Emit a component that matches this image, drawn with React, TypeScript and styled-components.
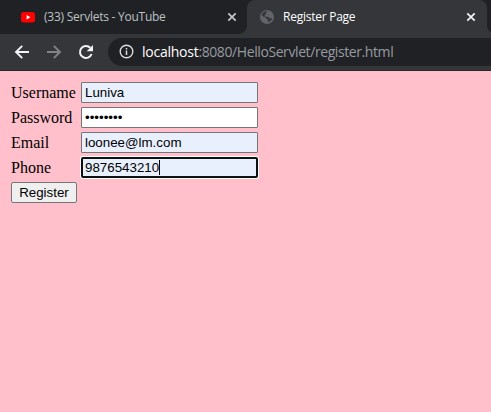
import React from "react";
import styled, { createGlobalStyle } from "styled-components";

const GlobalStyle = createGlobalStyle`
  * { box-sizing: border-box; }
  body { margin: 0; background: #ffc0cb; overflow: hidden; }
`;

const Browser = styled.div`
  width: 491px;
  height: 412px;
  display: flex;
  flex-direction: column;
  background: #ffc0cb;
  font-family: "Open Sans", "Noto Sans", sans-serif;
`;

const TabStrip = styled.div`
  display: flex;
  height: 34px;
  flex: none;
  background: #202124;
`;

const Tab = styled.div<{ $active?: boolean }>`
  position: relative;
  display: flex;
  align-items: center;
  width: ${(p) => (p.$active ? 240 : 247)}px;
  padding: ${(p) => (p.$active ? "0 11px 0 12px" : "0 10px 0 20px")};
  gap: 8px;
  flex: none;
  border-radius: 8px 8px 0 0;
  background: ${(p) => (p.$active ? "#35363a" : "#202124")};
  color: ${(p) => (p.$active ? "#ffffff" : "#bdc1c6")};

  ${(p) =>
    p.$active &&
    `
    &::before, &::after {
      content: "";
      position: absolute;
      bottom: 0;
      width: 8px;
      height: 8px;
    }
    &::before { left: -8px; background: radial-gradient(circle at 0 0, #202124 7.5px, #35363a 8px); }
    &::after { right: -8px; background: radial-gradient(circle at 100% 0, #202124 7.5px, #35363a 8px); }
  `}
`;

const TabTitle = styled.span<{ $spacing: number }>`
  flex: 1;
  font-size: 12px;
  line-height: 16px;
  white-space: nowrap;
  letter-spacing: ${(p) => p.$spacing}px;
`;

const Icon = styled.svg`
  display: block;
  flex: none;
`;

const Toolbar = styled.div`
  display: flex;
  align-items: center;
  height: 37px;
  flex: none;
  padding: 0 0 1px 14px;
  background: #35363a;
  border-bottom: 1px solid #29292d;
`;

const NavButton = styled.div`
  display: flex;
  width: 32px;
  flex: none;
`;

const AddressBar = styled.div`
  display: flex;
  align-items: center;
  flex: 1;
  height: 28px;
  margin-left: -2px;
  padding-left: 11px;
  gap: 8px;
  border-radius: 14px 0 0 14px;
  background: #202124;
`;

const Url = styled.span`
  font-size: 14px;
  line-height: 20px;
  letter-spacing: -0.41px;
  white-space: nowrap;
  color: #969ba1;
`;

const Host = styled.span`
  letter-spacing: -0.25px;
  color: #ffffff;
`;

const Form = styled.form`
  display: grid;
  grid-template-columns: 66px 177px;
  grid-template-rows: repeat(5, 21px);
  gap: 4px;
  padding: 11px 0 0 11px;
`;

const Label = styled.label`
  font: 16px/21px "Liberation Serif", serif;
  color: #000;
`;

const Field = styled.div`
  position: relative;
  height: 21px;
`;

const Input = styled.input<{ $filled?: boolean; $focused?: boolean }>`
  display: block;
  width: 177px;
  height: 21px;
  margin: 0;
  padding: 1px 3px;
  border: 1px solid #767676;
  border-radius: 1px;
  outline: none;
  background: ${(p) => (p.$filled ? "#e8f0fe" : "#fff")};
  color: #000;
  font: 13.333px "Liberation Sans", Arial, sans-serif;
  ${(p) =>
    p.$focused &&
    `
    border: 2px solid #101010;
    border-radius: 2px;
    padding: 0 2px;
    box-shadow: 0 0 0 1px #fff;
  `}
`;

const Caret = styled.span`
  position: absolute;
  left: 78px;
  top: 3px;
  width: 1px;
  height: 15px;
  background: #000;
`;

const Submit = styled.button`
  width: 66px;
  height: 21px;
  padding: 0;
  border: 1px solid #767676;
  border-radius: 2px;
  background: #efefef;
  color: #000;
  font: 13.333px "Liberation Sans", Arial, sans-serif;
`;

const CloseIcon = ({ color }: { color: string }) => (
  <Icon width="10" height="10" viewBox="0 0 10 10">
    <path d="M1.3 1.3 8.7 8.7M8.7 1.3 1.3 8.7" stroke={color} strokeWidth="1.7" />
  </Icon>
);

const YouTubeIcon = () => (
  <Icon width="16" height="16" viewBox="0 0 16 16">
    <rect x="1" y="3" width="14" height="10.5" rx="2.5" fill="#f00" />
    <path d="M6.6 6v4.4L10.4 8.2z" fill="#fff" />
  </Icon>
);

const GlobeIcon = () => (
  <Icon width="16" height="16" viewBox="0 0 16 16">
    <circle cx="8" cy="8" r="7" fill="#606368" />
    <path
      d="M8.6 2.4C6.9 3 6.7 4.2 7.1 5.1L5.6 6.3l.3 1.5h3.3l1.1 1.5h2.9c-.5 1.7-1.6 3-3.2 3.6l-1.2-.6.1-1.7-1.4-.6-.7-1.6-2.1-.6-1.9-1.4C2.9 4 5.1 2 8.6 2.4z"
      fill="#35363a"
    />
  </Icon>
);

const ArrowIcon = ({ color, flipped }: { color: string; flipped?: boolean }) => (
  <Icon width="16" height="16" viewBox="0 0 16 16">
    <path
      d="M15 8H2.5M8.2 1.8 2 8l6.2 6.2"
      transform={flipped ? "translate(16 0) scale(-1 1)" : undefined}
      fill="none"
      stroke={color}
      strokeWidth="1.9"
    />
  </Icon>
);

const ReloadIcon = () => (
  <Icon width="16" height="16" viewBox="0 0 16 16">
    <path d="M13.6 10A6 6 0 1 1 12.3 3.8" fill="none" stroke="#f1f3f4" strokeWidth="2" />
    <path d="M15 1v6.3H8.7z" fill="#f1f3f4" />
  </Icon>
);

const InfoIcon = () => (
  <Icon width="15" height="15" viewBox="0 0 15 15">
    <circle cx="7.5" cy="7.5" r="6.3" fill="none" stroke="#dadce0" strokeWidth="1.4" />
    <path d="M7.5 6.6V11M7.5 3.9v1.5" stroke="#dadce0" strokeWidth="1.5" />
  </Icon>
);

const fields = [
  { label: "Username", value: "Luniva", filled: true },
  { label: "Password", value: "password", type: "password" },
  { label: "Email", value: "loonee@lm.com", filled: true },
  { label: "Phone", value: "9876543210", filled: true, focused: true },
];

export default function App() {
  return (
    <Browser>
      <GlobalStyle />
      <TabStrip>
        <Tab>
          <YouTubeIcon />
          <TabTitle $spacing={-0.25}>(33) Servlets - YouTube</TabTitle>
          <CloseIcon color="#c4c7ca" />
        </Tab>
        <Tab $active>
          <GlobeIcon />
          <TabTitle $spacing={-0.25}>Register Page</TabTitle>
          <CloseIcon color="#f1f3f4" />
        </Tab>
      </TabStrip>
      <Toolbar>
        <NavButton><ArrowIcon color="#f1f3f4" /></NavButton>
        <NavButton><ArrowIcon color="#828387" flipped /></NavButton>
        <NavButton><ReloadIcon /></NavButton>
        <AddressBar>
          <InfoIcon />
          <Url><Host>localhost</Host>:8080/HelloServlet/register.html</Url>
        </AddressBar>
      </Toolbar>
      <Form onSubmit={(e) => e.preventDefault()}>
        {fields.map((f) => (
          <React.Fragment key={f.label}>
            <Label htmlFor={f.label}>{f.label}</Label>
            <Field>
              <Input
                id={f.label}
                type={f.type ?? "text"}
                defaultValue={f.value}
                $filled={f.filled}
                $focused={f.focused}
              />
              {f.focused && <Caret />}
            </Field>
          </React.Fragment>
        ))}
        <Submit>Register</Submit>
      </Form>
    </Browser>
  );
}
